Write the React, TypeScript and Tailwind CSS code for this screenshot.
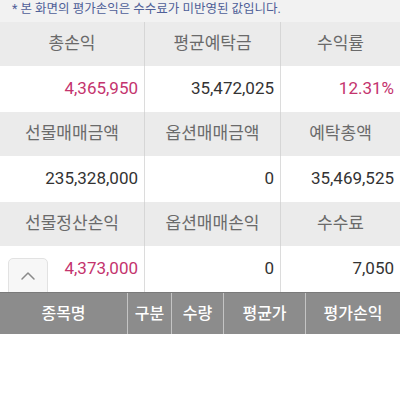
import { ChevronUp } from "lucide-react"

export default function App() {
  // 요약 그리드: 헤더 라벨 + 값 (pink = 손익 강조)
  const rows = [
    {
      labels: ["총손익", "평균예탁금", "수익률"],
      values: [
        { v: "4,365,950", pink: true },
        { v: "35,472,025", pink: false },
        { v: "12.31%", pink: true },
      ],
    },
    {
      labels: ["선물매매금액", "옵션매매금액", "예탁총액"],
      values: [
        { v: "235,328,000", pink: false },
        { v: "0", pink: false },
        { v: "35,469,525", pink: false },
      ],
    },
    {
      labels: ["선물정산손익", "옵션매매손익", "수수료"],
      values: [
        { v: "4,373,000", pink: true },
        { v: "0", pink: false },
        { v: "7,050", pink: false },
      ],
    },
  ]

  const cols = ["w-[145px]", "w-[136px]", "flex-1"]

  const listHeader = [
    { label: "종목명", w: "w-[128px]" },
    { label: "구분", w: "w-[44px]" },
    { label: "수량", w: "w-[52px]" },
    { label: "평균가", w: "w-[82px]" },
    { label: "평가손익", w: "flex-1" },
  ]

  return (
    <div className="w-[400px] h-[400px] bg-white overflow-hidden font-['Roboto','Noto_Sans_CJK_KR',sans-serif]">
      <div className="h-[22px] bg-[#f2f2f2] flex items-start pl-[12px] text-[12.5px] leading-[18px] text-[#4f5f98]">
        * 본 화면의 평가손익은 수수료가 미반영된 값입니다.
      </div>

      {rows.map((row, i) => (
        <div key={i} className="relative">
          <div className="flex h-[44px] bg-[#ebebeb]">
            {row.labels.map((l, j) => (
              <div
                key={j}
                className={`${cols[j]} flex items-center justify-center text-[17px] text-[#6a6a6a] ${j < 2 ? "border-r border-[#d6d6d6]" : ""}`}
              >
                {l}
              </div>
            ))}
          </div>
          <div className="flex h-[46px] bg-white">
            {row.values.map((c, j) => (
              <div
                key={j}
                className={`${cols[j]} flex items-center justify-end pr-[6px] text-[17px] ${c.pink ? "text-[#c4346e]" : "text-[#333]"} ${j < 2 ? "border-r border-[#dcdcdc]" : ""}`}
              >
                {c.v}
              </div>
            ))}
          </div>
          {i === 2 && (
            <div className="absolute left-[8px] top-[56px] w-[40px] h-[40px] rounded-[5px] border border-[#e2e2e2] bg-[#f7f7f7] flex justify-center pt-[5px]">
              <ChevronUp size={24} strokeWidth={1.5} className="text-[#8a8a8a]" />
            </div>
          )}
        </div>
      ))}

      <div className="relative flex h-[42px] bg-[#8c8c8c] border-t border-[#7a7a7a]">
        {listHeader.map((h, i) => (
          <div
            key={i}
            className={`${h.w} flex items-center justify-center text-[16px] text-white font-medium ${i < 4 ? "border-r border-[#c4c4c4]" : ""}`}
          >
            {h.label}
          </div>
        ))}
      </div>
    </div>
  )
}
